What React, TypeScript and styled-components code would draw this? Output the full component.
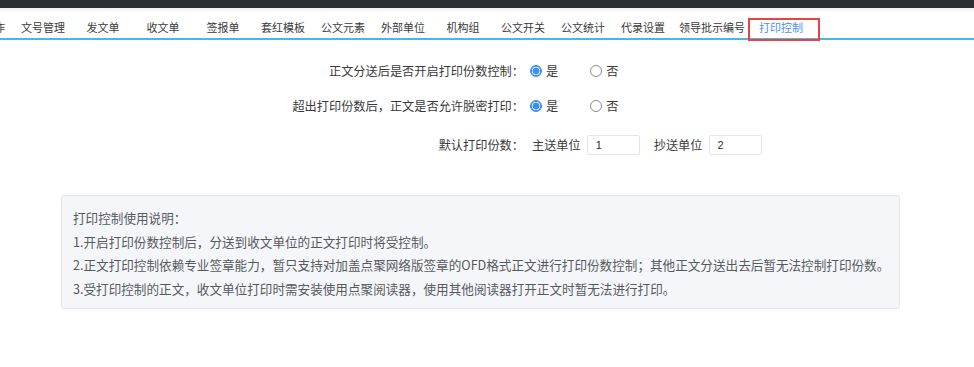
import styled, { createGlobalStyle } from "styled-components";

const GlobalStyle = createGlobalStyle`
  body {
    margin: 0;
    background: #ffffff;
    font-family: "Noto Sans CJK SC", "Noto Sans", sans-serif;
    color: #333;
  }
`;

const Page = styled.div`
  width: 974px;
  height: 367px;
  overflow: hidden;
`;

const TopBar = styled.div`
  height: 8px;
  background: #2c2c34;
`;

const TabBar = styled.div`
  height: 30px;
  display: flex;
  background: linear-gradient(#efefef, #ffffff 5px);
  border-bottom: 2px solid #48b6ec;
`;

const TabStrip = styled.div`
  display: flex;
  margin-left: -47px;
`;

const Tab = styled.div<{ $active?: boolean; $wide?: boolean }>`
  position: relative;
  min-width: 60px;
  box-sizing: border-box;
  padding: 8px ${(p) => (p.$wide ? 6 : 8)}px 0;
  display: flex;
  align-items: center;
  justify-content: center;
  font-size: 11px;
  white-space: nowrap;
  color: ${(p) => (p.$active ? "#4a94e8" : "#3a3a3a")};
`;

const Highlight = styled.span`
  position: absolute;
  left: -3px;
  right: -9px;
  top: 10px;
  bottom: -3px;
  border: 2px solid #e8443e;
  pointer-events: none;
`;

const Form = styled.div`
  display: grid;
  grid-template-columns: 524px auto;
  row-gap: 11px;
  padding-top: 19px;
  font-size: 12.2px;
  color: #3a3a3a;
`;

const Label = styled.div<{ $extra?: number }>`
  height: 24px;
  display: flex;
  align-items: center;
  justify-content: flex-end;
  margin-top: ${(p) => p.$extra || 0}px;
`;

const Field = styled.div<{ $extra?: number }>`
  height: 24px;
  display: flex;
  align-items: center;
  margin-top: ${(p) => p.$extra || 0}px;
`;

const RadioOption = styled.label`
  display: flex;
  align-items: center;
  gap: 4px;
  margin-left: 6px;
  margin-right: 26px;
`;

const RadioDot = styled.span<{ $checked?: boolean }>`
  width: 12px;
  height: 12px;
  box-sizing: border-box;
  border-radius: 50%;
  border: 1px solid ${(p) => (p.$checked ? "#3d8ff0" : "#8a8a8a")};
  background: ${(p) =>
    p.$checked
      ? "radial-gradient(circle, #3d8ff0 0 3.2px, #fff 3.8px 4px, #3d8ff0 4.5px)"
      : "#fff"};
`;

const UnitText = styled.span<{ $gap?: number }>`
  margin-left: ${(p) => p.$gap || 0}px;
`;

const NumberBox = styled.div`
  width: 53px;
  height: 20px;
  box-sizing: border-box;
  margin-left: 6px;
  padding-left: 8px;
  border: 1px solid #e2e4ea;
  border-radius: 2px;
  display: flex;
  align-items: center;
  font-size: 11px;
  font-family: "Liberation Sans", Arial, sans-serif;
  color: #333;
`;

const Notice = styled.div`
  margin: 38px 0 0 61px;
  width: 839px;
  box-sizing: border-box;
  padding: 10px 2px 8px 11px;
  background: #f5f6f9;
  border: 1px solid #e2e5ec;
  border-radius: 3px;
  font-size: 12.6px;
  line-height: 23.5px;
  color: #555a61;
  white-space: nowrap;
`;

const tabs = [
  "公文工作",
  "文号管理",
  "发文单",
  "收文单",
  "签报单",
  "套红模板",
  "公文元素",
  "外部单位",
  "机构组",
  "公文开关",
  "公文统计",
  "代录设置",
  "领导批示编号",
  "打印控制",
];

const notes = [
  "打印控制使用说明：",
  "1.开启打印份数控制后，分送到收文单位的正文打印时将受控制。",
  "2.正文打印控制依赖专业签章能力，暂只支持对加盖点聚网络版签章的OFD格式正文进行打印份数控制；其他正文分送出去后暂无法控制打印份数。",
  "3.受打印控制的正文，收文单位打印时需安装使用点聚阅读器，使用其他阅读器打开正文时暂无法进行打印。",
];

const YesNo = () => (
  <>
    <RadioOption>
      <RadioDot $checked />
      是
    </RadioOption>
    <RadioOption>
      <RadioDot />
      否
    </RadioOption>
  </>
);

export default function App() {
  return (
    <Page>
      <GlobalStyle />
      <TopBar />
      <TabBar>
        <TabStrip>
          {tabs.map((t) => (
            <Tab key={t} $active={t === "打印控制"} $wide={t.length > 4}>
              {t}
              {t === "打印控制" && <Highlight />}
            </Tab>
          ))}
        </TabStrip>
      </TabBar>
      <Form>
        <Label>正文分送后是否开启打印份数控制：</Label>
        <Field>
          <YesNo />
        </Field>
        <Label>超出打印份数后，正文是否允许脱密打印：</Label>
        <Field>
          <YesNo />
        </Field>
        <Label $extra={4}>默认打印份数：</Label>
        <Field $extra={4}>
          <UnitText $gap={8}>主送单位</UnitText>
          <NumberBox>1</NumberBox>
          <UnitText $gap={14}>抄送单位</UnitText>
          <NumberBox>2</NumberBox>
        </Field>
      </Form>
      <Notice>
        {notes.map((n) => (
          <div key={n}>{n}</div>
        ))}
      </Notice>
    </Page>
  );
}
